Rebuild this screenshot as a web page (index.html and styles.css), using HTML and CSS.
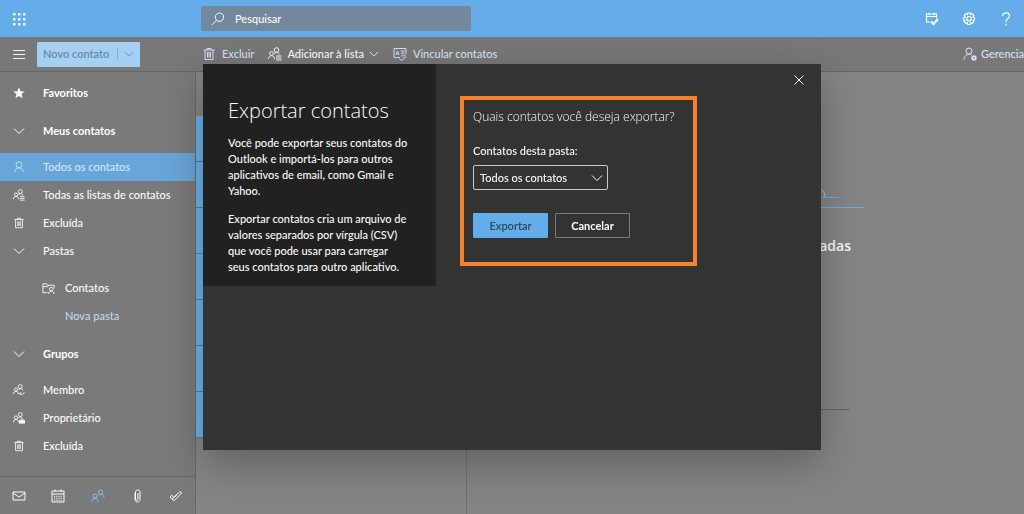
FILE: index.html
```html
<!DOCTYPE html>
<html lang="pt-BR">
<head>
<meta charset="utf-8">
<meta name="viewport" content="width=device-width, initial-scale=1">
<title>Exportar contatos</title>
<link rel="stylesheet" href="styles.css">
</head>
<body>
<svg class="sprite" aria-hidden="true">
  <symbol id="chevron" viewBox="0 0 12 12"><path d="M1 3.500l5 5 5-5"/></symbol>
  <symbol id="trash" viewBox="0 0 14 14"><path d="M1.500 3h11M5 3V1.500h4V3M3 3v9.500h8V3M5.500 5v5.500M7 5v5.500M8.500 5v5.500"/></symbol>
  <symbol id="people-list" viewBox="0 0 14 14"><circle cx="8.500" cy="3" r="2.300"/><circle cx="3.500" cy="6.500" r="1.900"/><path d="M.5 12c0-4.500 6-4.500 6 0M6 7c1.500-2 4.500-2 5.700.5M8 9h5.500M8 11h5.500M8 13h5.500"/></symbol>
  <symbol id="people-sync" viewBox="0 0 14 14"><circle cx="8.500" cy="3" r="2.300"/><circle cx="3.500" cy="6.500" r="1.900"/><path d="M.5 12c0-4.500 6-4.500 6 0M6 7c1.500-2 4.500-2 5.700.5M8 10.500c1 3 4.500 2 5-1M8 12.500v-2h2"/></symbol>
  <symbol id="people-lock" viewBox="0 0 14 14"><circle cx="8.500" cy="3" r="2.300"/><circle cx="3.500" cy="6.500" r="1.900"/><path d="M.5 12c0-4.500 6-4.500 6 0M6 7c1.500-2 4-1.500 5 .5M9 10V9c0-1.300 3-1.300 3 0v1"/><path class="solid" d="M7 9.500h7v4H7z"/></symbol>
  <symbol id="person" viewBox="0 0 14 14"><circle cx="7" cy="4.500" r="3.500"/><path d="M2 13c0-6.500 10-6.500 10 0"/></symbol>
</svg>
<div class="app">
  <header class="topbar">
    <button class="icon-btn launcher" aria-label="Aplicativos">
      <svg viewBox="0 0 14 14" width="14" height="14"><path class="solid" d="M1 1h2.500v2.500H1zM6 1h2.500v2.500H6zM11 1h2.500v2.500H11zM1 6h2.500v2.500H1zM6 6h2.500v2.500H6zM11 6h2.500v2.500H11zM1 11h2.500v2.500H1zM6 11h2.500v2.500H6zM11 11h2.500v2.500H11z"/></svg>
    </button>
    <label class="search">
      <svg viewBox="0 0 14 14" width="14" height="14"><circle cx="8.500" cy="5.200" r="4.200"/><path d="M5.500 8.300L.8 13"/></svg>
      <input type="text" placeholder="Pesquisar" aria-label="Pesquisar">
    </label>
    <div class="top-actions">
      <button class="icon-btn" aria-label="Meu dia"><svg viewBox="0 0 14 14" width="14" height="14"><path d="M5 10H1.500V2h10v4M1.500 4.500h10M4 .7V3M9 .7V3"/><path class="strong" d="M6 9.500l2.500 2.500L13 7"/></svg></button>
      <button class="icon-btn" aria-label="Configurações"><svg viewBox="0 0 14 14" width="14" height="14"><path d="M5.800 1h2.400l.4 1.600 1.500-.9 1.700 1.700-.9 1.500 1.600.5v2.400l-1.600.5.9 1.500-1.700 1.700-1.500-.9-.4 1.900H5.800l-.4-1.900-1.500.9-1.700-1.700.9-1.500-1.600-.5V5.400l1.600-.5-.9-1.500 1.700-1.700 1.500.9z"/><circle cx="7" cy="6.700" r="2.200"/></svg></button>
      <button class="icon-btn" aria-label="Ajuda"><svg viewBox="0 0 14 14" width="14" height="14"><path d="M3.500 4c0-4.300 7-4.300 7 0 0 2.500-3.500 2.700-3.500 6M7 11.800v1.700"/></svg></button>
    </div>
  </header>

  <div class="toolbar">
    <button class="icon-btn launcher" aria-label="Menu"><svg viewBox="0 0 14 14" width="14" height="14"><path d="M1 3.500h12M1 7.500h12M1 11.500h12"/></svg></button>
    <button class="new-contact">Novo contato<span class="split"></span><svg width="10" height="10"><use href="#chevron"/></svg></button>
    <div class="commands">
      <button class="command"><svg width="14" height="14"><use href="#trash"/></svg>Excluir</button>
      <button class="command plain"><svg width="14" height="14"><use href="#people-list"/></svg>Adicionar à lista<svg width="10" height="10"><use href="#chevron"/></svg></button>
      <button class="command"><svg viewBox="0 0 14 14" width="14" height="14"><path d="M7 10.500H1V1.500h12V7M3 8l1.500-4L6 8M3.500 6.800h2M8 4h3.500M8 6h3.500M8 9.500c0-2 5-2 5 0s-3 2-3 0"/><path d="M6.500 11.500c0 2 4.500 2 4.500 0"/></svg>Vincular contatos</button>
      <button class="command manage"><svg viewBox="0 0 14 14" width="14" height="14"><circle cx="6" cy="4" r="3"/><path d="M1 12.500C1 7 7 6.500 8.500 8"/><circle class="strong" cx="11" cy="11" r="1.700"/></svg>Gerencia</button>
    </div>
  </div>

  <div class="body">
    <aside class="sidebar">
      <nav class="folders">
        <a href="#" class="row head"><svg viewBox="0 0 12 12" width="12" height="12"><path class="solid" d="M6 .3l1.600 3.900 4.200.2-3.300 2.700 1.100 4.200L6 9l-3.600 2.300 1.100-4.200L.2 4.400l4.200-.2z"/></svg>Favoritos</a>
        <a href="#" class="row head spaced"><svg width="12" height="12"><use href="#chevron"/></svg>Meus contatos</a>
        <a href="#" class="row selected"><svg width="12" height="12"><use href="#person"/></svg>Todos os contatos</a>
        <a href="#" class="row"><svg width="12" height="12"><use href="#people-list"/></svg>Todas as listas de contatos</a>
        <a href="#" class="row"><svg width="12" height="12"><use href="#trash"/></svg>Excluída</a>
        <a href="#" class="row"><svg width="12" height="12"><use href="#chevron"/></svg>Pastas</a>
        <div class="sub">
          <a href="#" class="row"><svg viewBox="0 0 14 14" width="13" height="13"><path d="M6 11.500H1V2h4l1 1.500h7V7M1 5h5l1-1.500"/><circle cx="10" cy="7.700" r="1.900"/><path d="M7 13c0-4 6-4 6 0"/></svg>Contatos</a>
          <a href="#" class="row new-folder">Nova pasta</a>
        </div>
        <a href="#" class="row head spaced"><svg width="12" height="12"><use href="#chevron"/></svg>Grupos</a>
        <a href="#" class="row"><svg width="12" height="12"><use href="#people-sync"/></svg>Membro</a>
        <a href="#" class="row"><svg width="12" height="12"><use href="#people-lock"/></svg>Proprietário</a>
        <a href="#" class="row"><svg width="12" height="12"><use href="#trash"/></svg>Excluída</a>
      </nav>
      <nav class="modules">
        <a href="#" aria-label="Email"><svg viewBox="0 0 14 14" width="14" height="14"><path d="M1 3h12v8H1zM1 4l6 4 6-4"/></svg></a>
        <a href="#" aria-label="Calendário"><svg viewBox="0 0 14 14" width="14" height="14"><path d="M1 2h12v11H1zM1 5h12M4 .5V3M10 .5V3"/><path stroke-dasharray="1.200 1" d="M3 7.300h8.500M3 9.300h8.500M3 11.300h8.500"/></svg></a>
        <a href="#" aria-label="Pessoas" class="active"><svg viewBox="0 0 14 14" width="14" height="14"><circle cx="9.500" cy="3.200" r="2.200"/><circle cx="4" cy="7" r="2"/><path d="M1 13c0-5 6-5 6 0M7.500 6.500c2-2 5.500-1 5.500 2"/></svg></a>
        <a href="#" aria-label="Arquivos"><svg viewBox="0 0 14 14" width="14" height="14"><path d="M5 4v6.500c0 3.300 5 3.300 5 0V3c0-2.700-4.500-2.700-4.500 0v7c0 1.700 2.500 1.700 2.500 0V4"/></svg></a>
        <a href="#" aria-label="Tarefas"><svg viewBox="0 0 14 14" width="14" height="14"><path d="M1 8l1.700-1.700L5 8.500l6-6L12.800 4 5 11.800zM3 10l2-1.500 2.500-3"/></svg></a>
      </nav>
    </aside>
    <section class="list" aria-label="Lista de contatos">
      <div class="contact"></div><div class="contact"></div><div class="contact"></div><div class="contact"></div><div class="contact"></div><div class="contact"></div><div class="contact"></div>
    </section>
    <main class="reading">
      <svg class="art" viewBox="0 0 60 22" width="60" height="22"><path class="grey" d="M14 1c5 0 7 4 7 8"/><path class="blue" d="M0 9.500h35M0 19.500h60"/></svg>
      <p class="status">adas</p>
      <hr class="rule">
    </main>
  </div>
</div>

<div class="overlay">
  <section class="dialog" role="dialog" aria-modal="true" aria-labelledby="title">
    <div class="intro">
      <h1 id="title">Exportar contatos</h1>
      <p>Você pode exportar seus contatos do<br>Outlook e importá-los para outros<br>aplicativos de email, como Gmail e<br>Yahoo.</p>
      <p>Exportar contatos cria um arquivo de<br>valores separados por vírgula (CSV)<br>que você pode usar para carregar<br>seus contatos para outro aplicativo.</p>
    </div>
    <div class="content">
      <button class="close" aria-label="Fechar"><svg viewBox="0 0 12 12" width="12" height="12"><path d="M1.500 1.500l9 9M10.500 1.500l-9 9"/></svg></button>
      <form class="export">
        <h2>Quais contatos você deseja exportar?</h2>
        <label for="folder">Contatos desta pasta:</label>
        <div class="select"><select id="folder"><option>Todos os contatos</option></select><svg width="12" height="12"><use href="#chevron"/></svg></div>
        <div class="buttons"><button type="button" class="primary">Exportar</button><button type="button" class="secondary">Cancelar</button></div>
      </form>
    </div>
  </section>
</div>
</body>
</html>
```
FILE: styles.css
```css
* { box-sizing: border-box; }
body {
  margin: 0;
  color: #fafafa;
  background: #858585;
  font: 500 11px/16px Lato, "Open Sans", sans-serif;
  overflow: hidden;
}
button, input, select { font: inherit; color: inherit; }
button { border: 0; background: none; padding: 0; white-space: nowrap; }
a { color: inherit; text-decoration: none; }
svg { fill: none; stroke: currentColor; stroke-width: 1; flex: none; }
.solid { fill: currentColor; stroke: none; }
.strong { stroke-width: 2; }
.sprite { position: absolute; width: 0; height: 0; }

.app { display: flex; flex-direction: column; height: 100vh; }
.topbar { display: flex; align-items: center; height: 37px; flex: none; background: #64ade8; }
.icon-btn { display: flex; align-items: center; justify-content: center; width: 37px; height: 32px; }
.search {
  display: flex; align-items: center; gap: 10px;
  width: 270px; height: 25px; margin-left: 164px; padding: 0 10px;
  background: #73889c; border-radius: 2px;
}
.search input { flex: 1; min-width: 0; border: 0; padding: 0; background: none; outline: 0; }
.search input::placeholder { color: #fafafa; opacity: 1; }
.top-actions { display: flex; margin-left: auto; color: #fff; }
.top-actions svg { stroke-width: 1.2; }

.toolbar { display: flex; align-items: center; height: 35px; flex: none; background: #787878; border-bottom: 1px solid #676767; }
.toolbar > .new-contact {
  display: flex; align-items: center; height: 25px; width: 103px; padding: 0 6px;
  background: #a4d0f3; color: #6b8ba8; border-radius: 1px; font-weight: 600;
}
.split { width: 1px; height: 12px; margin: 0 6px 0 auto; background: #86adcd; }
.commands { display: flex; flex: 1; align-items: center; gap: 14px; padding-left: 62px; }
.command { display: flex; align-items: center; gap: 6px; color: #d4e0f3; }
.plain { gap: 5px; color: #fafafa; }
.manage { margin-left: auto; gap: 4px; }
.launcher { color: #eaf3fb; }

.body { display: flex; flex: 1; min-height: 0; }
.sidebar { display: flex; flex-direction: column; width: 196px; flex: none; background: #7a7a7a; border-right: 1px solid #696969; }
.folders { flex: 1; padding-top: 7px; }
.row { display: flex; align-items: center; gap: 18px; height: 28px; padding-left: 13px; }
.head { font-weight: 700; color: #fff; }
.spaced { margin: 10px 0 8px; }
.selected { background: #69a5d8; color: #cfe7fa; }
.sub { padding: 9px 0 0 29px; }
.sub .row { gap: 10px; }
.sub .new-folder { padding-left: 36px; color: #c4d6ed; }
.modules { display: flex; align-items: center; justify-content: space-between; height: 38px; padding: 0 12px; border-top: 1px solid #696969; }
.modules a { display: flex; }
.modules .active { color: #8fc0ee; }

.list { width: 271px; flex: none; padding-top: 44px; border-right: 1px solid #707070; }
.contact { height: 46px; background: #6cb2ea; border-bottom: 1px solid #4f7ca3; }
.reading { display: flex; flex: 1; min-width: 0; flex-direction: column; align-items: flex-end; padding: 116px 160px 0 0; }
.art .grey { stroke: #b8c2c9; }
.art .blue { stroke: #5ab4f8; }
.status { margin: 26px 13px 0 0; font: 600 14px/20px "Open Sans", "Noto Sans", sans-serif; }
.rule { width: 200px; margin: 153px 14px 0 0; border: 0; border-top: 1px solid #676767; }

.overlay { position: fixed; inset: 0; display: flex; align-items: center; justify-content: center; }
.dialog {
  display: flex; align-items: flex-start; width: 618px; max-width: 100%; min-height: 386px;
  background: #333; box-shadow: 0 14px 40px rgba(0, 0, 0, .28);
}
.intro { width: 233px; flex: none; padding: 31px 0 11px 25px; background: #212121; white-space: nowrap; }
.intro h1 { margin: 0 0 8px; font: 300 20px/32px "Open Sans", "Noto Sans", sans-serif; }
.intro p { margin: 0 0 12px; }
.intro p:last-child { margin: 0; }
.content { display: flex; flex: 1; flex-direction: column; padding: 8px 14px 0 24px; }
.close { display: flex; align-items: center; justify-content: center; width: 16px; height: 16px; align-self: flex-end; }
.export { width: 237px; margin-top: 8px; padding: 8px 9px 24px; border: 4px solid #f58232; }
.export h2 { margin: 0 0 17px; font: 300 12px/18px "Open Sans", "Noto Sans", sans-serif; white-space: nowrap; }
.export label { display: block; margin-bottom: 6px; }
.select { position: relative; width: 135px; height: 25px; }
.select select { appearance: none; width: 100%; height: 100%; padding: 0 6px; border: 1px solid #c8c8c8; border-radius: 2px; background: #333; }
.select svg { position: absolute; right: 5px; top: 7px; pointer-events: none; }
.buttons { display: flex; gap: 7px; margin-top: 23px; }
.buttons button { width: 75px; height: 25px; border-radius: 1px; font-weight: 600; }
.buttons .primary { background: #64ade8; color: #294861; }
.buttons .secondary { border: 1px solid #7b7b7b; color: #fff; font-weight: 700; }
```
